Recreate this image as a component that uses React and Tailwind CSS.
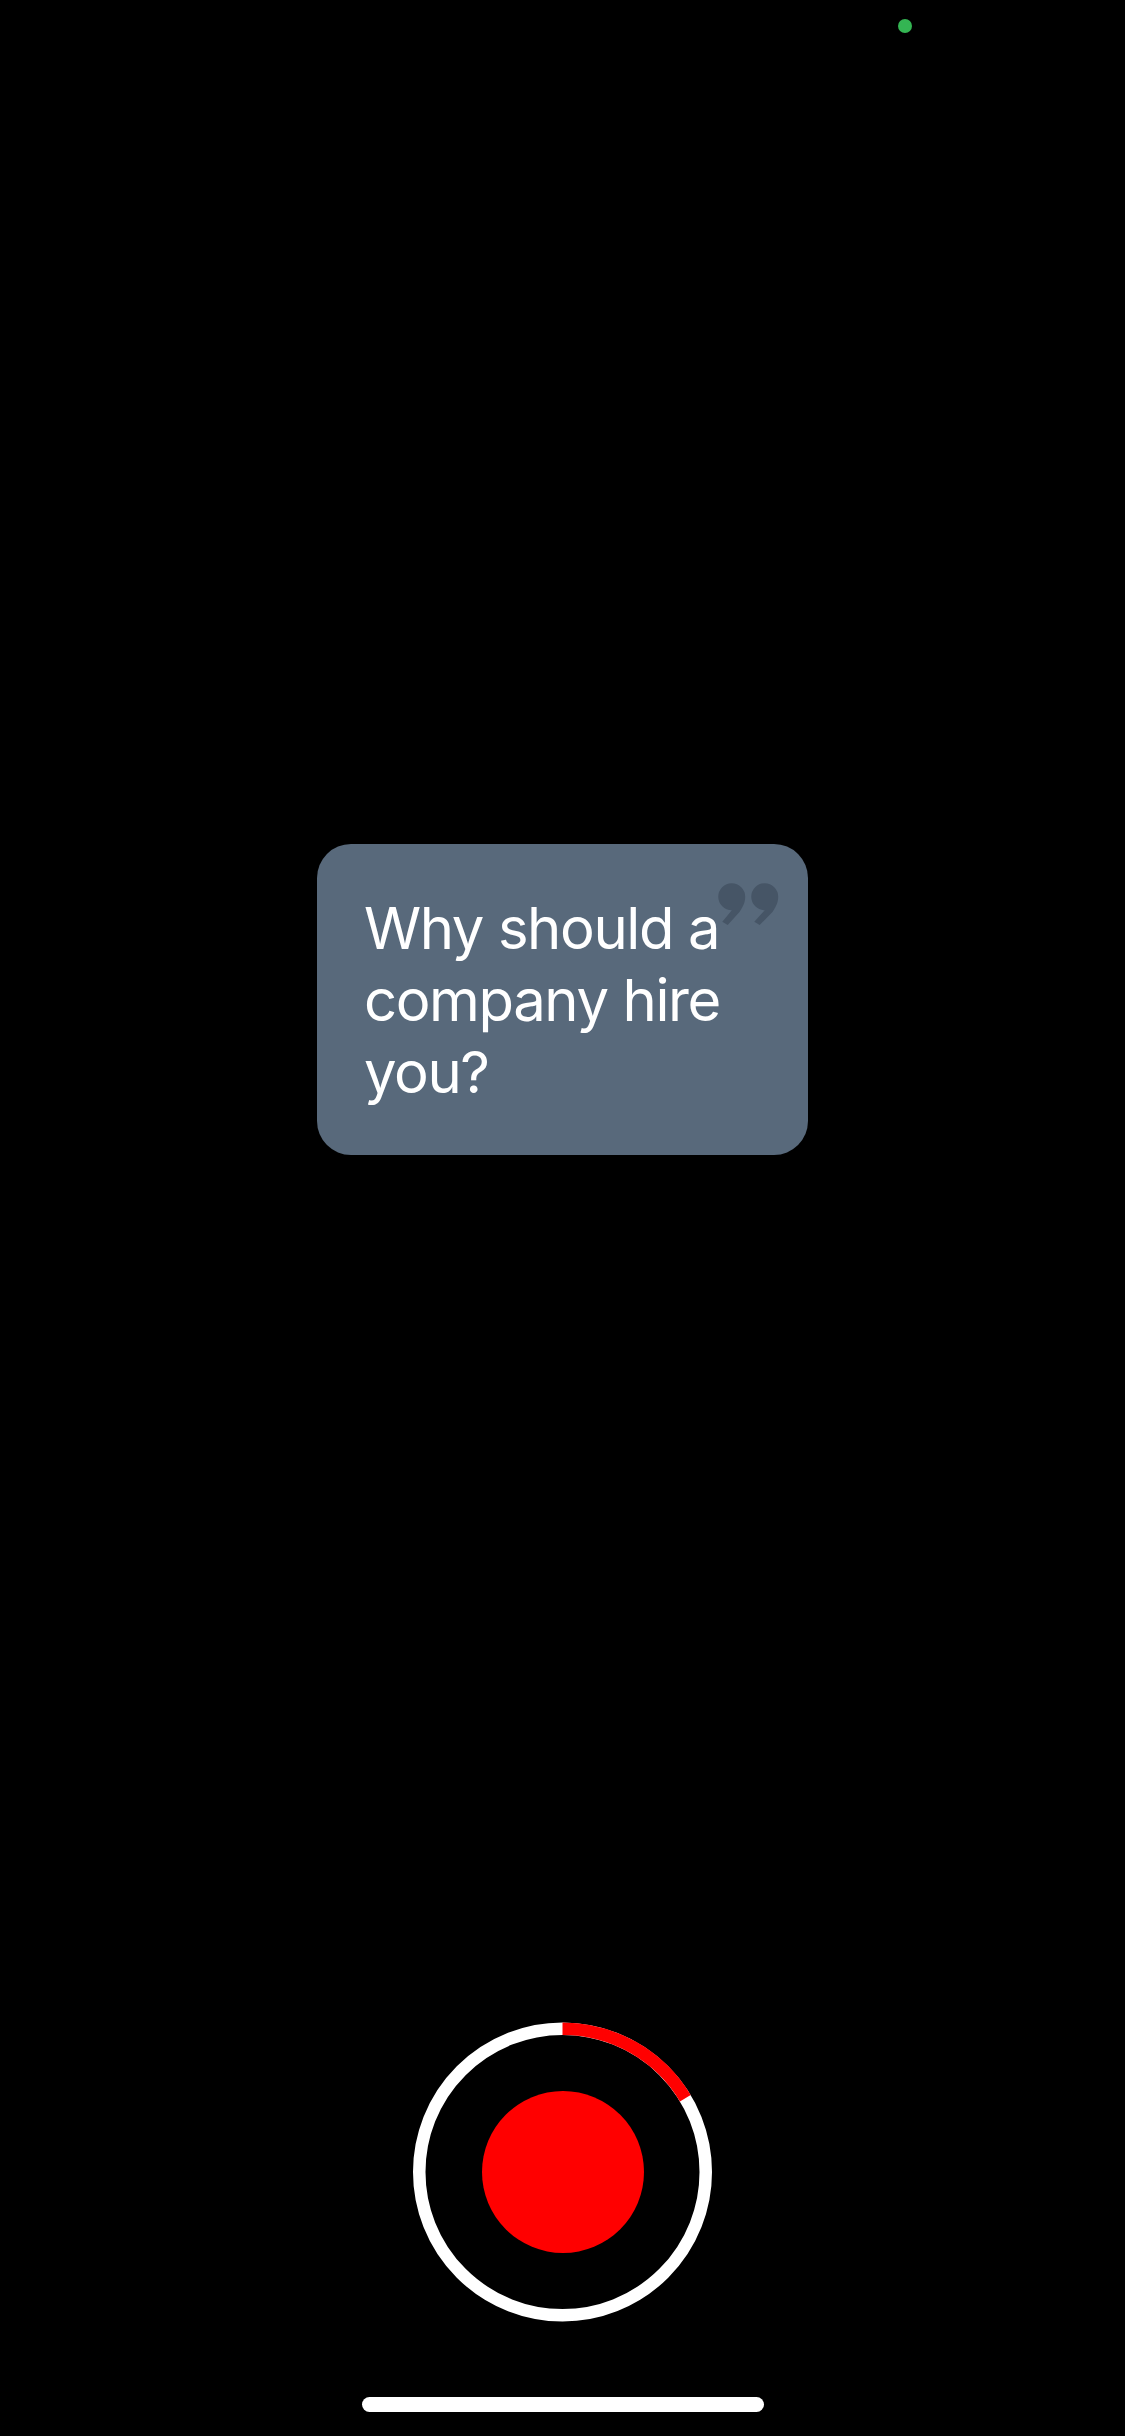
import React from 'react';

const QuoteMark = () => (
    <svg viewBox="0 0 64 46" className="absolute left-[399px] top-[38px] w-[64px] h-[46px]" fill="#465566">
        <path d="M15.7 1.2a13.5 13.5 0 0 1 13.5 13.5c0 6-2.5 10.500-5.500 15L11.700 43 6.300 39.700 15.800 28.200a13.500 13.500 0 0 1-.1-27z" />
        <path d="M48.700 1.200a13.500 13.500 0 0 1 13.500 13.500c0 6-2.500 10.500-5.500 15L43.700 43 38.300 39.700 48.800 28.200a13.500 13.500 0 0 1-.1-27z" />
    </svg>
);

const RecordButton = () => (
    <button className="relative mx-auto w-[299px] h-[300px] flex items-center justify-center">
        <svg viewBox="0 0 299 300" className="absolute inset-0 w-full h-full" fill="none" strokeWidth="12.5">
            <circle cx="149.500" cy="150" r="143.250" stroke="#ffffff" />
            <path d="M149.500 6.750A143.250 143.250 0 0 1 272.300 76.200" stroke="#ff0000" />
        </svg>
        <span className="block w-[162px] h-[162px] rounded-full bg-[#ff0000]" />
    </button>
);

export default function App() {
    return (
        <div className="w-full h-[2436px] bg-black flex flex-col font-['Inter',sans-serif]">
            {/* Privacy dot */}
            <div className="flex justify-end pt-[19px] pr-[213px]">
                <span className="block w-[14px] h-[14px] rounded-full bg-[#34b553]" />
            </div>

            {/* Question card */}
            <div className="relative mx-auto mt-[811px] w-[491px] h-[311px] rounded-[34px] bg-[#58697b] pl-[47px] pr-[50px] pt-[48px]">
                <QuoteMark />
                <p className="relative text-white text-[58px] leading-[72px] tracking-[-1.4px]">Why should a company hire you?</p>
            </div>

            <div className="mt-[867px]">
                <RecordButton />
            </div>

            {/* Home indicator */}
            <div className="mt-[75px] mx-auto w-[402px] h-[15px] rounded-full bg-white" />
        </div>
    );
}
